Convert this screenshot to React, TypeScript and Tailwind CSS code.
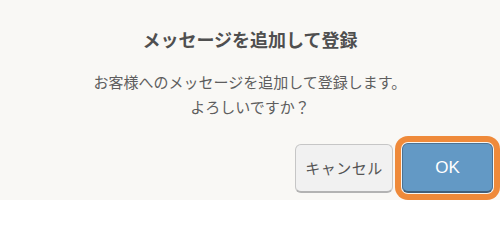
export default function App() {
  return (
    <div
      className="w-[500px] h-[200px] bg-[#f9f8f5] flex flex-col items-center overflow-hidden"
      style={{ fontFamily: '"Noto Sans CJK JP", "Noto Sans", sans-serif' }}
    >
      <h2 className="mt-[26px] text-[18px] leading-[26px] font-bold text-[#4f4f4f]">
        メッセージを追加して登録
      </h2>
      <div className="mt-[17px] text-[15px] leading-[25px] text-[#5e5e5e] text-center">
        <p>お客様へのメッセージを追加して登録します。</p>
        <p>よろしいですか？</p>
      </div>
      <div className="mt-auto self-stretch flex justify-end items-end gap-[9px] pr-[7px] pb-[7px]">
        <button
          type="button"
          className="w-[98px] h-[49px] rounded-[6px] border border-[#c6c6c6] border-b-2 border-b-[#b3b3b3] bg-[#f1f1f1] text-[15px] tracking-[0.5px] text-[#555]"
        >
          キャンセル
        </button>
        <button
          type="button"
          className="w-[91px] h-[50px] rounded-[6px] border border-[#4c7293] border-b-2 border-b-[#435f78] bg-[#6399c5] text-[17px] text-white shadow-[0_0_0_1px_#f7f6f2,0_0_0_7px_#ef8a3a]"
          style={{ fontFamily: '"Liberation Sans", Arial, sans-serif' }}
        >
          OK
        </button>
      </div>
    </div>
  );
}
